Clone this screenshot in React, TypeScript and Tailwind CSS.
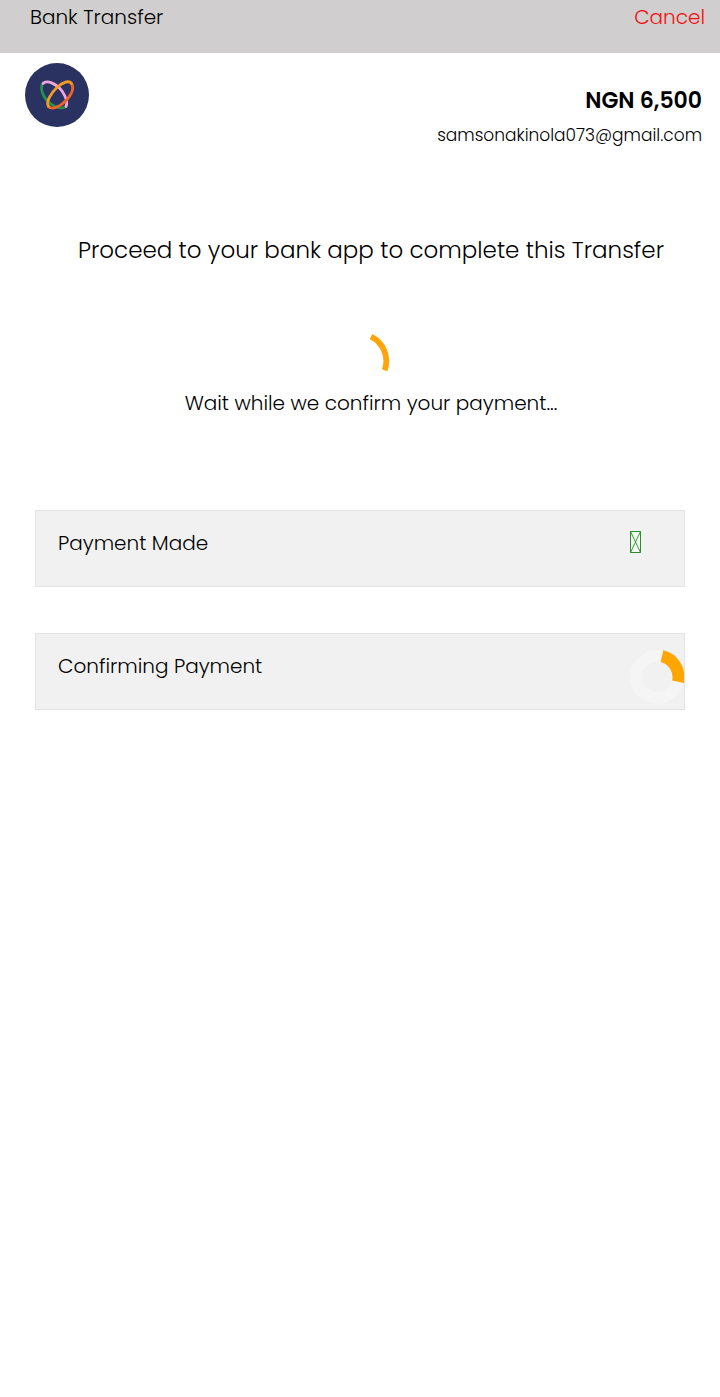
import type { ReactNode } from "react";

function Logo() {
  return (
    <svg viewBox="0 0 64 64" className="size-16" role="img" aria-label="Merchant logo">
      <circle cx="32" cy="32" r="32" fill="#2a3261" />
      <g fill="none" strokeWidth="2.8" strokeLinecap="round">
        <path d="M18 20 C14 26 19 36 26 41 C31 45 38 46 41 43.500" stroke="#22924d" />
        <path d="M18 20.500 C22 16.500 32 21 37 28 C41 34 43 40 41 43.500" stroke="#efa5dc" />
        <path d="M46 20 C51 26 44 36 37 41 C32 45 26 46.500 23.500 43.500" stroke="#ee6428" />
        <path d="M23.500 43.500 C20.500 39 26 30 32 24.500 C38 19 44 17 46.500 20.500" stroke="#f49b23" />
      </g>
    </svg>
  );
}

function WaitSpinner() {
  return (
    <svg viewBox="0 0 60 60" className="size-15" role="img" aria-label="Loading">
      <path d="M41 5.600 A27 27 0 0 1 54.600 39.300" fill="none" stroke="#ffa50a" strokeWidth="5.800" />
    </svg>
  );
}

function StepSpinner() {
  return (
    <svg viewBox="0 0 55 55" className="size-[55px]" role="img" aria-label="In progress">
      <circle cx="28" cy="27" r="21" fill="none" stroke="#f5f5f5" strokeWidth="12" />
      <path d="M33 6.200 A21.500 21.500 0 0 1 49 31.800" fill="none" stroke="#ffa500" strokeWidth="12" />
    </svg>
  );
}

function DoneMark() {
  return (
    <svg viewBox="0 0 12 22" className="mt-1 h-[22px] w-[12px]" role="img" aria-label="Done">
      <path d="M1.500.5h10v21h-10z" fill="#f1fbf1" stroke="#2c8c2c" />
      <path d="M1.500.5l10 21M11.500.5l-10 21" fill="none" stroke="#2c8c2c" strokeWidth=".9" />
    </svg>
  );
}

function Step({ label, children }: { label: string; children: ReactNode }) {
  return (
    <li className="flex h-[77px] items-start border border-[#e4e4e4] bg-[#f1f1f1] pt-4 pl-[22px]">
      <span className="grow text-xl leading-8">{label}</span>
      <span className="w-[55px] shrink-0">{children}</span>
    </li>
  );
}

export default function App() {
  return (
    <div className="min-h-screen bg-white font-[Poppins,Inter,sans-serif] font-light text-black">
      <header className="flex h-[53px] items-start justify-between bg-[#d0cece] pr-[15px] pl-[30px] text-xl leading-[34px]">
        <h1>Bank Transfer</h1>
        <button type="button" className="text-[#f01010]">Cancel</button>
      </header>
      <section className="flex justify-between pt-[10px] pr-[18px] pl-[25px]">
        <Logo />
        <div className="pt-[22px] text-right">
          <p className="text-[22px] leading-8 font-semibold">NGN 6,500</p>
          <p className="mt-[2px] text-[17px] leading-8">samsonakinola073@gmail.com</p>
        </div>
      </section>
      <main>
        <h2 className="mt-[81px] pl-[22px] text-center text-[23px] leading-9">
          Proceed to your bank app to complete this Transfer
        </h2>
        <div className="mt-[63px] flex justify-center">
          <WaitSpinner />
        </div>
        <p className="-mt-1 pl-[22px] text-center text-xl leading-8">
          Wait while we confirm your payment...
        </p>
        <ul className="mt-[91px] flex flex-col gap-[46px] px-[35px]">
          <Step label="Payment Made">
            <DoneMark />
          </Step>
          <Step label="Confirming Payment">
            <StepSpinner />
          </Step>
        </ul>
      </main>
    </div>
  );
}
